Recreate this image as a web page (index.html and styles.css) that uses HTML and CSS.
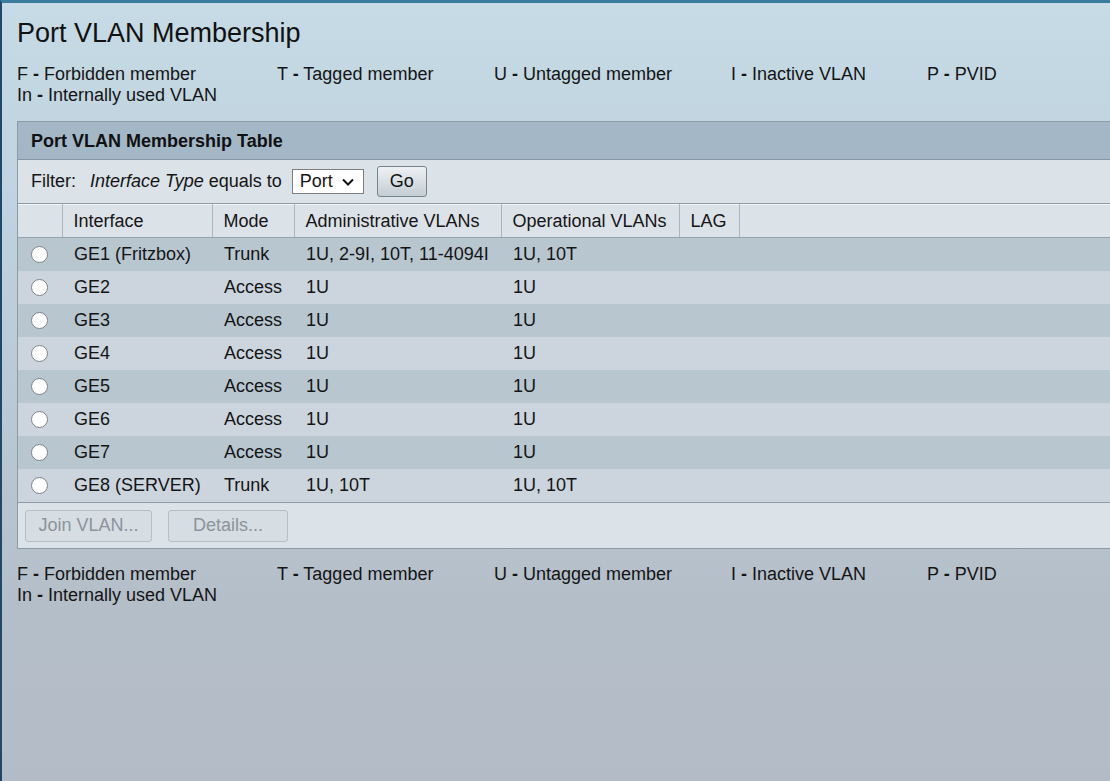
FILE: index.html
```html
<!DOCTYPE html>
<html>
<head>
<meta charset="utf-8">
<link rel="stylesheet" href="styles.css">
</head>
<body>
<div class="page">
  <h1 class="title">Port VLAN Membership</h1>
  <div class="legend">
    <span>F <b>-</b> Forbidden member</span>
    <span>T <b>-</b> Tagged member</span>
    <span>U <b>-</b> Untagged member</span>
    <span>I <b>-</b> Inactive VLAN</span>
    <span>P <b>-</b> PVID</span>
    <span>In <b>-</b> Internally used VLAN</span>
  </div>

  <div class="panel">
    <div class="panel-head">Port VLAN Membership Table</div>
    <div class="filter">
      <span class="f-label">Filter:</span>
      <span class="f-text"><i>Interface Type</i> equals to</span>
      <div class="select">
        <span>Port</span>
        <svg width="14" height="10" viewBox="0 0 14 10"><path d="M2 2.5 L7 7.5 L12 2.5" fill="none" stroke="#111" stroke-width="2"/></svg>
      </div>
      <button class="go">Go</button>
    </div>
    <table class="grid">
      <colgroup>
        <col class="c0"><col class="c1"><col class="c2"><col class="c3"><col class="c4"><col class="c5"><col>
      </colgroup>
      <thead>
        <tr><th></th><th>Interface</th><th>Mode</th><th>Administrative VLANs</th><th>Operational VLANs</th><th>LAG</th><th class="last"></th></tr>
      </thead>
      <tbody>
        <tr class="odd"><td class="rc"><span class="radio"></span></td><td>GE1 (Fritzbox)</td><td>Trunk</td><td>1U, 2-9I, 10T, 11-4094I</td><td>1U, 10T</td><td></td><td></td></tr>
        <tr class="even"><td class="rc"><span class="radio"></span></td><td>GE2</td><td>Access</td><td>1U</td><td>1U</td><td></td><td></td></tr>
        <tr class="odd"><td class="rc"><span class="radio"></span></td><td>GE3</td><td>Access</td><td>1U</td><td>1U</td><td></td><td></td></tr>
        <tr class="even"><td class="rc"><span class="radio"></span></td><td>GE4</td><td>Access</td><td>1U</td><td>1U</td><td></td><td></td></tr>
        <tr class="odd"><td class="rc"><span class="radio"></span></td><td>GE5</td><td>Access</td><td>1U</td><td>1U</td><td></td><td></td></tr>
        <tr class="even"><td class="rc"><span class="radio"></span></td><td>GE6</td><td>Access</td><td>1U</td><td>1U</td><td></td><td></td></tr>
        <tr class="odd"><td class="rc"><span class="radio"></span></td><td>GE7</td><td>Access</td><td>1U</td><td>1U</td><td></td><td></td></tr>
        <tr class="even"><td class="rc"><span class="radio"></span></td><td>GE8 (SERVER)</td><td>Trunk</td><td>1U, 10T</td><td>1U, 10T</td><td></td><td></td></tr>
      </tbody>
    </table>
    <div class="actions">
      <button class="btn-dis join">Join VLAN...</button>
      <button class="btn-dis details">Details...</button>
    </div>
  </div>

  <div class="legend legend-bottom">
    <span>F <b>-</b> Forbidden member</span>
    <span>T <b>-</b> Tagged member</span>
    <span>U <b>-</b> Untagged member</span>
    <span>I <b>-</b> Inactive VLAN</span>
    <span>P <b>-</b> PVID</span>
    <span>In <b>-</b> Internally used VLAN</span>
  </div>
</div>
</body>
</html>
```

FILE: styles.css
```css
html, body {
  margin: 0;
  padding: 0;
  height: 100%;
}
body {
  box-sizing: border-box;
  overflow: hidden;
  border-top: 3px solid #3b7b9e;
  border-left: 2px solid #1d4a6c;
  background: linear-gradient(180deg, #c6dbe5 0%, #c0d3de 25%, #b9c8d2 55%, #b4bec8 78%, #b3bcc6 100%);
  font-family: "Liberation Sans", Arial, sans-serif;
  font-size: 18px;
  color: #141414;
}
.page {
  padding: 15px 0 0 15px;
}
.title {
  margin: 0;
  font-size: 27px;
  font-weight: normal;
  line-height: 31px;
  color: #111;
}
.legend {
  margin-top: 15px;
  display: grid;
  grid-template-columns: 260px 217px 237px 196px auto;
  line-height: 21px;
}
.legend b {
  font-weight: bold;
}
.panel {
  margin-top: 15px;
  margin-right: -40px;
  border: 1px solid #8b9aa7;
  background: #dbe2e8;
}
.panel-head {
  height: 37px;
  line-height: 38px;
  padding-left: 13px;
  background: #a3b7c7;
  border-bottom: 1px solid #8597a6;
  font-weight: bold;
  color: #111;
}
.filter {
  height: 43px;
  display: flex;
  align-items: center;
  padding-left: 13px;
  border-bottom: 1px solid #8e9ba6;
}
.f-label {
  margin-right: 14px;
}
.f-text {
  margin-right: 10px;
}
.select {
  box-sizing: border-box;
  width: 72px;
  height: 25px;
  background: #fff;
  border: 1px solid #7d7d7d;
  display: flex;
  align-items: center;
  justify-content: space-between;
  padding: 0 8px 0 7px;
}
.go {
  box-sizing: border-box;
  margin-left: 13px;
  width: 50px;
  height: 31px;
  border: 1px solid #75858f;
  border-radius: 3px;
  background: linear-gradient(180deg, #eef1f4 0%, #d6dde3 55%, #c4cdd4 100%);
  font-family: inherit;
  font-size: 18px;
  color: #111;
  padding: 0;
}
.grid {
  width: 100%;
  border-collapse: collapse;
  table-layout: fixed;
}
.c0 { width: 44px; }
.c1 { width: 150px; }
.c2 { width: 82px; }
.c3 { width: 207px; }
.c4 { width: 178px; }
.c5 { width: 60px; }
.grid th {
  height: 32px;
  padding: 0 0 0 11px;
  text-align: left;
  font-weight: normal;
  background: #dbe2e8;
  border-top: 1px solid #f4f7f9;
  border-bottom: 1px solid #95a3ae;
  border-left: 1px solid #f4f7f9;
  border-right: 1px solid #aab7c2;
  color: #161616;
}
.grid th:first-child {
  border-left: none;
}
.grid th.last {
  border-right: none;
}
.grid td {
  height: 33px;
  padding: 0 0 0 12px;
  white-space: nowrap;
}
.grid td.rc {
  padding-left: 13px;
}
.odd td { background: #b8c6d0; }
.even td { background: #ccd5dd; }
.radio {
  display: block;
  box-sizing: border-box;
  width: 17px;
  height: 17px;
  border-radius: 50%;
  border: 1px solid #7c8288;
  background: #fff;
}
.actions {
  height: 45px;
  border-top: 1px solid #8e9ba6;
  display: flex;
  align-items: center;
  padding-left: 7px;
  gap: 16px;
}
.btn-dis {
  box-sizing: border-box;
  height: 32px;
  border: 1px solid #b4bec6;
  border-radius: 3px;
  background: #d6dde3;
  color: #8b949b;
  font-family: inherit;
  font-size: 18px;
  padding: 0;
}
.join { width: 127px; }
.details { width: 120px; }
.legend-bottom {
  margin-top: 15px;
}
```
